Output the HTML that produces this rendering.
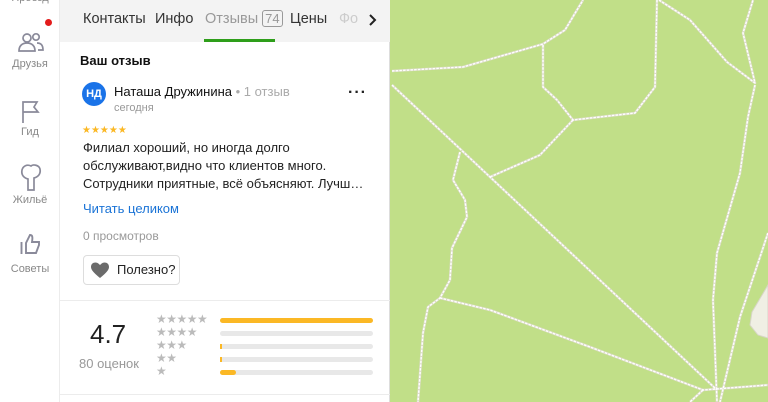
<!DOCTYPE html>
<html><head><meta charset="utf-8"><style>
*{margin:0;padding:0;box-sizing:border-box}
body{width:768px;height:402px;overflow:hidden;position:relative;font-family:"Liberation Sans","DejaVu Sans",sans-serif;background:#c1df88}
.side{position:absolute;left:0;top:0;width:60px;height:402px;background:#fff;border-right:1px solid #ececec}
.si{position:absolute;left:0;width:60px;text-align:center;font-size:11px;color:#888}
.panel{position:absolute;left:60px;top:0;width:330px;height:402px;background:#fff;border-right:1px solid #ddd}
.tabs{height:42px;background:#f3f3f3;position:relative;font-size:14.5px;color:#333}
.tabs span{position:absolute;top:11px}
.abs{position:absolute}
</style></head><body>
<svg class="abs" style="left:390px;top:0" width="378" height="402" viewBox="390 0 378 402">
<g fill="none" stroke-linejoin="round">
<g stroke="#dcdcc8" stroke-width="2.6">
<polyline points="392,71 463,67 543,44 565,30 583,0"/>
<polyline points="543,45 543,87 557,100 573,120 635,113 655,87 657,0"/>
<polyline points="573,120 540,155 490,177"/>
<polyline points="392,85 717,390"/>
<polyline points="460,152 453,180 465,200 467,217 452,248 450,280 440,298 428,307 423,333 418,402"/>
<polyline points="440,298 490,310 590,347 703,390 768,385"/>
<polyline points="659,0 690,20 727,62 755,83 743,33 753,0"/>
<polyline points="755,85 748,117 740,173 717,253 713,300 717,402"/>
<polyline points="768,233 740,317 720,402"/>
<polyline points="703,390 690,402"/>
</g>
<g stroke="#fff" stroke-width="1.4" stroke-dasharray="2.5 1.2">
<polyline points="392,71 463,67 543,44 565,30 583,0"/>
<polyline points="543,45 543,87 557,100 573,120 635,113 655,87 657,0"/>
<polyline points="573,120 540,155 490,177"/>
<polyline points="392,85 717,390"/>
<polyline points="460,152 453,180 465,200 467,217 452,248 450,280 440,298 428,307 423,333 418,402"/>
<polyline points="440,298 490,310 590,347 703,390 768,385"/>
<polyline points="659,0 690,20 727,62 755,83 743,33 753,0"/>
<polyline points="755,85 748,117 740,173 717,253 713,300 717,402"/>
<polyline points="768,233 740,317 720,402"/>
<polyline points="703,390 690,402"/>
</g>
</g>
<path d="M768,285 L752,312 L750,325 L758,335 L768,338Z" fill="#f0efe4" stroke="#d8d6c8"/>
</svg>
<div class="side">
<div class="si" style="top:-8px">Проезд</div>
<div class="abs" style="left:45px;top:19px;width:7px;height:7px;border-radius:50%;background:#e31c1c"></div>
<svg class="abs" style="left:18px;top:31px" width="26" height="22" fill="none" stroke="#8a8a9a" stroke-width="1.7"><circle cx="9" cy="7" r="4"/><path d="M1,20c0-5 3-8 8-8s8 3 8 8z"/><circle cx="18" cy="6" r="3.2"/><path d="M19,12c4 0 6 2 6 7h-5"/></svg>
<div class="si" style="top:58px">Друзья</div>
<svg class="abs" style="left:20px;top:100px" width="22" height="24" fill="none" stroke="#8a8a9a" stroke-width="1.7"><path d="M3,23V2h14l-3,5 4,5H3"/></svg>
<div class="si" style="top:126px">Гид</div>
<svg class="abs" style="left:19px;top:163px" width="24" height="28" fill="none" stroke="#8a8a9a" stroke-width="1.7"><path d="M9,27V16c-4-1-7-4-6-9 1-4 5-6 9-4 2-2 8-1 9 3 1 5-2 8-6 9v12z"/></svg>
<div class="si" style="top:194px">Жильё</div>
<svg class="abs" style="left:20px;top:233px" width="22" height="22" fill="none" stroke="#8a8a9a" stroke-width="1.9"><path d="M1.5,9v12M6,10l4-8c2 0 3 1 2 7h7v3l-3 8H6z"/></svg>
<div class="si" style="top:263px">Советы</div>
</div>
<div class="panel">
<div class="tabs">
<span style="left:23px">Контакты</span>
<span style="left:95px">Инфо</span>
<span style="left:145px;color:#999">Отзывы <b style="font-weight:normal;border:1px solid #999;border-radius:3px;padding:0 2px;font-size:13px">74</b></span>
<span style="left:230px">Цены</span>
<span style="left:279px;color:#ccc">Фо</span>
<div class="abs" style="left:300px;top:0;width:30px;height:42px;background:#f3f3f3"></div>
<svg class="abs" style="left:309px;top:14px" width="8" height="12"><path d="M1,1l5,5-5,5" fill="none" stroke="#222" stroke-width="2"/></svg>
<div class="abs" style="left:144px;top:39px;width:71px;height:3px;background:#2e9e1a"></div>
</div>
<div class="abs" style="left:20px;top:53px;font-size:13px;font-weight:bold;color:#111">Ваш отзыв</div>
<div class="abs" style="left:22px;top:82px;width:24px;height:24px;border-radius:50%;background:#1a73e8;color:#fff;font-size:11px;font-weight:bold;text-align:center;line-height:24px">НД</div>
<div class="abs" style="left:54px;top:84px;font-size:13px;color:#111">Наташа Дружинина <span style="color:#aaa">• 1 отзыв</span></div>
<div class="abs" style="left:54px;top:102px;font-size:11px;color:#999">сегодня</div>
<div class="abs" style="left:288px;top:84px;font-size:16px;font-weight:bold;color:#222;letter-spacing:1px">···</div>
<div class="abs" style="left:22px;top:125px;font-size:10px;color:#fbb825;letter-spacing:0px">★★★★★</div>
<div class="abs" style="left:23px;top:139px;font-size:13px;line-height:18px;color:#222;width:300px">Филиал хороший, но иногда долго обслуживают,видно что клиентов много. Сотрудники приятные, всё объясняют. Лучш…</div>
<div class="abs" style="left:23px;top:201px;font-size:13px;color:#1a73d6">Читать целиком</div>
<div class="abs" style="left:23px;top:229px;font-size:12px;color:#999">0 просмотров</div>
<div class="abs" style="left:23px;top:255px;width:97px;height:30px;border:1px solid #ddd;border-radius:4px;font-size:13px;color:#222;line-height:28px;padding-left:33px">Полезно?</div>
<svg class="abs" style="left:30px;top:262px" width="20" height="17"><path d="M10,16C4,11 1,8 1,5 1,2 3,0.5 5.5,0.5 7.5,0.5 9,2 10,3 11,2 12.5,0.5 14.5,0.5 17,0.5 19,2 19,5 19,8 16,11 10,16z" fill="#6b6b6b"/></svg>
<div class="abs" style="left:0;top:300px;width:330px;height:1px;background:#ececec"></div>
<div class="abs" style="left:30px;top:319px;font-size:26px;color:#222">4.7</div>
<div class="abs" style="left:19px;top:356px;font-size:13px;color:#999">80 оценок</div>
<div class="abs" style="left:96px;top:313px;font-size:12px;line-height:13px;color:#bbb;letter-spacing:-0.5px">★★★★★<br>★★★★<br>★★★<br>★★<br>★</div>
<div class="abs" style="left:160px;top:318px;width:153px;height:5px;border-radius:3px;background:#fbb825"></div>
<div class="abs" style="left:160px;top:331px;width:153px;height:5px;border-radius:3px;background:#e8e8e8"></div>
<div class="abs" style="left:160px;top:344px;width:153px;height:5px;border-radius:3px;background:#e8e8e8"><div style="width:2px;height:5px;background:#fbb825"></div></div>
<div class="abs" style="left:160px;top:357px;width:153px;height:5px;border-radius:3px;background:#e8e8e8"><div style="width:2px;height:5px;background:#fbb825"></div></div>
<div class="abs" style="left:160px;top:370px;width:153px;height:5px;border-radius:3px;background:#e8e8e8"><div style="width:16px;height:5px;border-radius:3px;background:#fbb825"></div></div>
<div class="abs" style="left:0;top:394px;width:330px;height:1px;background:#ececec"></div>
</div>
</body></html>
